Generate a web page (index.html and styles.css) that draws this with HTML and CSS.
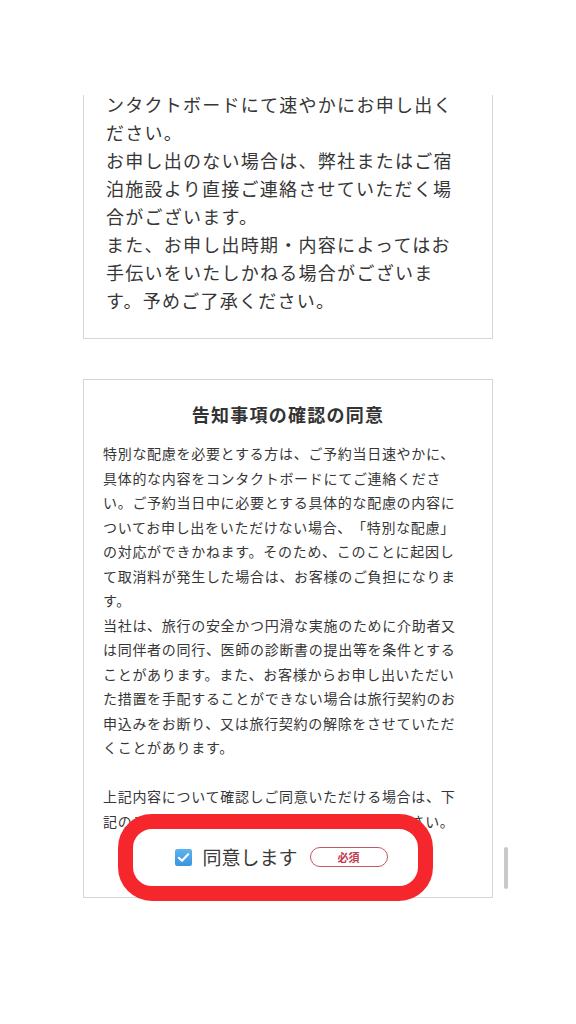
FILE: index.html
```html
<!DOCTYPE html>
<html lang="ja">
<head>
<meta charset="utf-8">
<title>告知事項の確認の同意</title>
<link rel="stylesheet" href="styles.css">
</head>
<body>
<div class="screen">
  <div class="topbar"></div>
  <div class="viewport">
    <div class="content">
      <section class="card card-notice">
        <p>ンタクトボードにて速やかにお申し出ください。<br>お申し出のない場合は、弊社またはご宿泊施設より直接ご連絡させていただく場合がございます。<br>また、お申し出時期・内容によってはお手伝いをいたしかねる場合がございます。予めご了承ください。</p>
      </section>
      <section class="card card-consent">
        <h2 class="consent-title">告知事項の確認の同意</h2>
        <p class="consent-text">特別な配慮を必要とする方は、ご予約当日速やかに、具体的な内容をコンタクトボードにてご連絡ください。ご予約当日中に必要とする具体的な配慮の内容についてお申し出をいただけない場合、「特別な配慮」の対応ができかねます。そのため、このことに起因して取消料が発生した場合は、お客様のご負担になります。<br>当社は、旅行の安全かつ円滑な実施のために介助者又は同伴者の同行、医師の診断書の提出等を条件とすることがあります。また、お客様からお申し出いただいた措置を手配することができない場合は旅行契約のお申込みをお断り、又は旅行契約の解除をさせていただくことがあります。</p>
        <p class="consent-text spaced">上記内容について確認しご同意いただける場合は、下記のチェックボックスにチェックを入れてください。</p>
        <label class="agree">
          <span class="checkbox">
            <svg width="17" height="17" viewBox="0 0 16 16" aria-hidden="true">
              <defs>
                <linearGradient id="cb" x1="0" y1="0" x2="0" y2="1">
                  <stop offset="0" stop-color="#5db3ef"/>
                  <stop offset="1" stop-color="#3a95e0"/>
                </linearGradient>
              </defs>
              <rect x="0" y="0" width="16" height="16" rx="2" fill="url(#cb)"/>
              <path d="M3.6 8.3 L6.6 11.1 L12.4 4.9" fill="none" stroke="#ffffff" stroke-width="2" stroke-linecap="round" stroke-linejoin="round"/>
            </svg>
          </span>
          <span class="agree-text">同意します</span>
          <span class="badge">必須</span>
        </label>
        <div class="highlight"></div>
      </section>
    </div>
  </div>
  <div class="scrollbar"></div>
</div>
</body>
</html>
```

FILE: styles.css
```css
* {
  box-sizing: border-box;
}

html, body {
  margin: 0;
  padding: 0;
  background: #ffffff;
}

body {
  font-family: "Noto Sans CJK JP", "Noto Sans", sans-serif;
  color: #363636;
  text-spacing-trim: space-all;
}

.screen {
  position: relative;
  width: 576px;
  height: 1024px;
  overflow: hidden;
  display: flex;
  flex-direction: column;
  background: #ffffff;
}

.topbar {
  flex: 0 0 95px;
  background: #ffffff;
}

.viewport {
  flex: 1 1 auto;
  overflow: hidden;
}

.content {
  margin-top: -6px;
  padding: 0 83px;
}

.card {
  border: 1px solid #d6d6d6;
  background: #ffffff;
}

.card-notice {
  padding: 0 22px 24px 22px;
}

.card-notice p {
  margin: 0;
  font-size: 18px;
  line-height: 28px;
  letter-spacing: 0.07em;
}

.card-consent {
  position: relative;
  margin-top: 40px;
  padding: 21px 19px 26px 19px;
}

.consent-title {
  margin: 0 0 14px 0;
  font-size: 18px;
  line-height: 26px;
  font-weight: 700;
  letter-spacing: 0.07em;
  text-align: center;
  color: #333333;
}

.consent-text {
  margin: 0;
  max-width: 360px;
  font-size: 14px;
  line-height: 24.5px;
  letter-spacing: 0.05em;
}

.consent-text.spaced {
  margin-top: 24.5px;
}

.agree {
  margin-top: 10px;
  padding-right: 13px;
  height: 28px;
  display: flex;
  align-items: center;
  justify-content: center;
}

.checkbox {
  width: 17px;
  height: 17px;
  display: flex;
}

.agree-text {
  margin-left: 10px;
  font-size: 19px;
  line-height: 28px;
  color: #3a3a3a;
}

.badge {
  margin-left: 12px;
  width: 78px;
  height: 20px;
  border: 1px solid #c65668;
  border-radius: 10px;
  display: flex;
  align-items: center;
  justify-content: center;
  font-size: 11px;
  font-weight: 700;
  color: #c23a4f;
  line-height: 1;
}

.highlight {
  position: absolute;
  left: 34px;
  top: 434px;
  width: 315px;
  height: 87px;
  border: 15px solid #f5272d;
  border-radius: 34px;
  pointer-events: none;
}

.scrollbar {
  position: absolute;
  left: 504px;
  top: 847px;
  width: 4px;
  height: 42px;
  border-radius: 2px;
  background: #c9c9c9;
}
```
